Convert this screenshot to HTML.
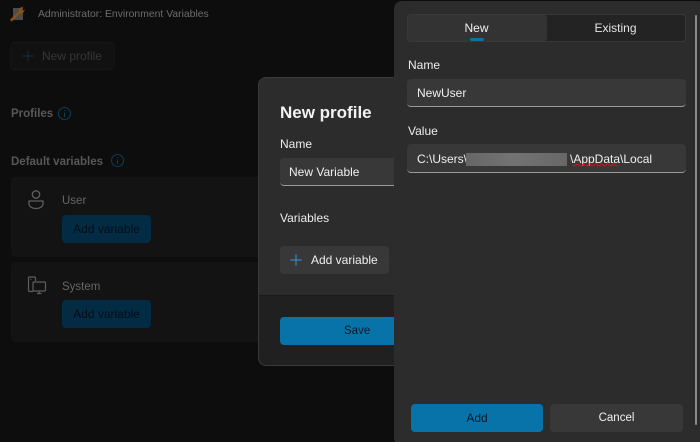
<!DOCTYPE html>
<html><head><meta charset="utf-8">
<style>
html,body{margin:0;padding:0;background:#0d0d0d}
#r{position:relative;width:700px;height:442px;overflow:hidden;background:#0d0d0d;font-family:"Liberation Sans",sans-serif;font-size:12.5px;color:#fff}
.a{position:absolute;white-space:nowrap;box-sizing:border-box}
.t{line-height:16px}
</style></head><body><div id="r">
<!-- background window -->
<svg class="a" style="left:9px;top:5px" width="17" height="17" viewBox="0 0 17 17"><rect x="4" y="3" width="10" height="12" fill="#4c4c4c"/><path d="M2.500 15L10.500 7" stroke="#8a5214" stroke-width="2.400" stroke-linecap="round"/><path d="M9.500 7.500L10.500 3L14.500 1.500L12.500 4.500L14 6L16 4L14.500 7.500L11 9Z" fill="#8a5214"/></svg>
<div class="a t" style="left:38px;top:7px;font-size:10.400px;color:#6c6c6c">Administrator: Environment Variables</div>
<div class="a" style="left:10px;top:42px;width:105px;height:28px;background:#111;border:1px solid #151515;border-radius:4px"></div>
<svg class="a" style="left:21px;top:49px" width="14" height="14"><path d="M7 1.500V12.500M1.500 7H12.500" stroke="#12303f" stroke-width="1"/></svg>
<div class="a t" style="left:42px;top:48px;font-size:12px;color:#363636">New profile</div>
<div class="a t" style="left:11px;top:106px;font-size:11.500px;font-weight:bold;color:#585858">Profiles</div>
<svg class="a" style="left:57px;top:106px" width="15" height="15"><circle cx="7.500" cy="7.500" r="6" fill="none" stroke="#0c3c55" stroke-width="1.100"/><path d="M7.500 6.500V11M7.500 4V5" stroke="#0c3c55"/></svg>
<div class="a t" style="left:11px;top:154px;font-size:11.500px;font-weight:bold;color:#585858">Default variables</div>
<svg class="a" style="left:110px;top:153px" width="15" height="15"><circle cx="7.500" cy="7.500" r="6" fill="none" stroke="#0c3c55" stroke-width="1.100"/><path d="M7.500 6.500V11M7.500 4V5" stroke="#0c3c55"/></svg>
<div class="a" style="left:11px;top:177px;width:260px;height:80px;background:#131313;border-radius:4px"></div>
<div class="a" style="left:11px;top:262px;width:260px;height:80px;background:#131313;border-radius:4px"></div>
<svg class="a" style="left:26px;top:189px" width="20" height="22" viewBox="0 0 20 22" fill="none" stroke="#5e5e5e" stroke-width="1.300"><circle cx="10" cy="5.500" r="3.700"/><path d="M3 12H17V14.500C17 17.500 14 19.500 10 19.500C6 19.500 3 17.500 3 14.500Z"/></svg>
<div class="a t" style="left:62px;top:193px;font-size:11.500px;color:#666">User</div>
<div class="a" style="left:62px;top:215px;width:89px;height:28px;background:#032c44;border-radius:4px;font-size:12px;line-height:28px;text-align:center;color:#010e16">Add variable</div>
<svg class="a" style="left:27px;top:276px" width="20" height="20" viewBox="0 0 20 20" fill="none" stroke="#5e5e5e" stroke-width="1.200"><path d="M6 15.500H2.500C1.800 15.500 1.500 15 1.500 14.500V2C1.500 1.300 2 1 2.500 1H7.500C8.200 1 8.500 1.500 8.500 2V5"/><rect x="6" y="6" width="12.500" height="9" rx="1"/><path d="M10 17.500H14.500M12.200 15.500V17.500"/><path d="M3.500 3.500H4.500"/></svg>
<div class="a t" style="left:62px;top:279px;font-size:11.500px;color:#666">System</div>
<div class="a" style="left:62px;top:300px;width:89px;height:28px;background:#032c44;border-radius:4px;font-size:12px;line-height:28px;text-align:center;color:#010e16">Add variable</div>
<!-- middle dialog -->
<div class="a" style="left:258px;top:77px;width:170px;height:289px;background:#2c2c2c;border:1px solid #3a3a3a;border-radius:8px;overflow:hidden">
<div class="a" style="left:0;top:217px;width:170px;height:72px;background:#202020;border-top:1px solid #1a1a1a"></div>
</div>
<div class="a t" style="left:280px;top:103px;font-size:17px;line-height:20px;font-weight:bold;color:#f2f2f2">New profile</div>
<div class="a t" style="left:280px;top:136px;font-size:12px;color:#eee">Name</div>
<div class="a" style="left:280px;top:158px;width:130px;height:28px;background:#383838;border-radius:4px;border-bottom:1px solid #9a9a9a"></div>
<div class="a t" style="left:289px;top:164px;font-size:12px;color:#f0f0f0">New Variable</div>
<div class="a t" style="left:280px;top:210px;font-size:12px;color:#eee">Variables</div>
<div class="a" style="left:280px;top:246px;width:109px;height:28px;background:#383838;border-radius:4px"></div>
<svg class="a" style="left:289px;top:253px" width="14" height="14"><path d="M7 1.500V12.500M1.500 7H12.500" stroke="#2e9bd6" stroke-width="1"/></svg>
<div class="a t" style="left:311px;top:252px;font-size:12px;color:#f0f0f0">Add variable</div>
<div class="a" style="left:280px;top:317px;width:130px;height:28px;background:#0873a8;border-radius:4px"></div>
<div class="a t" style="left:344px;top:323px;font-size:11.500px;color:#021a28">Save</div>
<!-- right panel -->
<div class="a" style="left:394px;top:1px;width:312px;height:445px;background:#2c2c2c;border-radius:8px"></div>
<div class="a" style="left:407px;top:14px;width:279px;height:28px;background:#232323;border:1px solid #383838;border-radius:4px"></div>
<div class="a" style="left:408px;top:15px;width:139px;height:26px;background:#333;border-radius:3px"></div>
<div class="a t" style="left:407px;top:20px;width:139px;text-align:center;font-size:12px;color:#f0f0f0">New</div>
<div class="a" style="left:470px;top:38px;width:14px;height:3px;background:#0a73a8;border-radius:2px"></div>
<div class="a t" style="left:546px;top:20px;width:139px;text-align:center;font-size:12px;color:#e4e4e4">Existing</div>
<div class="a t" style="left:408px;top:57px;font-size:12px;color:#eee">Name</div>
<div class="a" style="left:407px;top:79px;width:279px;height:28px;background:#383838;border-radius:4px;border-bottom:1px solid #9a9a9a"></div>
<div class="a t" style="left:417px;top:85px;font-size:12px;color:#f0f0f0">NewUser</div>
<div class="a t" style="left:408px;top:123px;font-size:12px;color:#eee">Value</div>
<div class="a" style="left:407px;top:144px;width:279px;height:29px;background:#383838;border-radius:4px;border-bottom:1px solid #9a9a9a"></div>
<div class="a t" style="left:417px;top:151px;font-size:12px;color:#f0f0f0">C:\Users\</div>
<div class="a" style="left:466px;top:153px;width:101px;height:13px;background:linear-gradient(90deg,#666,#737373 45%,#686868)"></div>
<div class="a t" style="left:570px;top:151px;font-size:12px;color:#f0f0f0">\AppData\Local</div>
<svg class="a" style="left:573px;top:163px" width="47" height="4"><path d="M0 1.500Q1.500 4 3 2T6 2T9 2T12 2T15 2T18 2T21 2T24 2T27 2T30 2T33 2T36 2T39 2T42 2T45 2" fill="none" stroke="#d01818" stroke-width="1"/></svg>
<div class="a" style="left:695px;top:15px;width:2px;height:410px;background:#8a8a8a;border-radius:1px"></div>
<div class="a" style="left:411px;top:404px;width:132px;height:28px;background:#0873a8;border-radius:4px;font-size:12px;line-height:28px;text-align:center;color:#021a28">Add</div>
<div class="a" style="left:550px;top:404px;width:133px;height:28px;background:#383838;border-radius:4px;font-size:11.500px;line-height:28px;text-align:center;color:#f0f0f0">Cancel</div>
</div></body></html>
